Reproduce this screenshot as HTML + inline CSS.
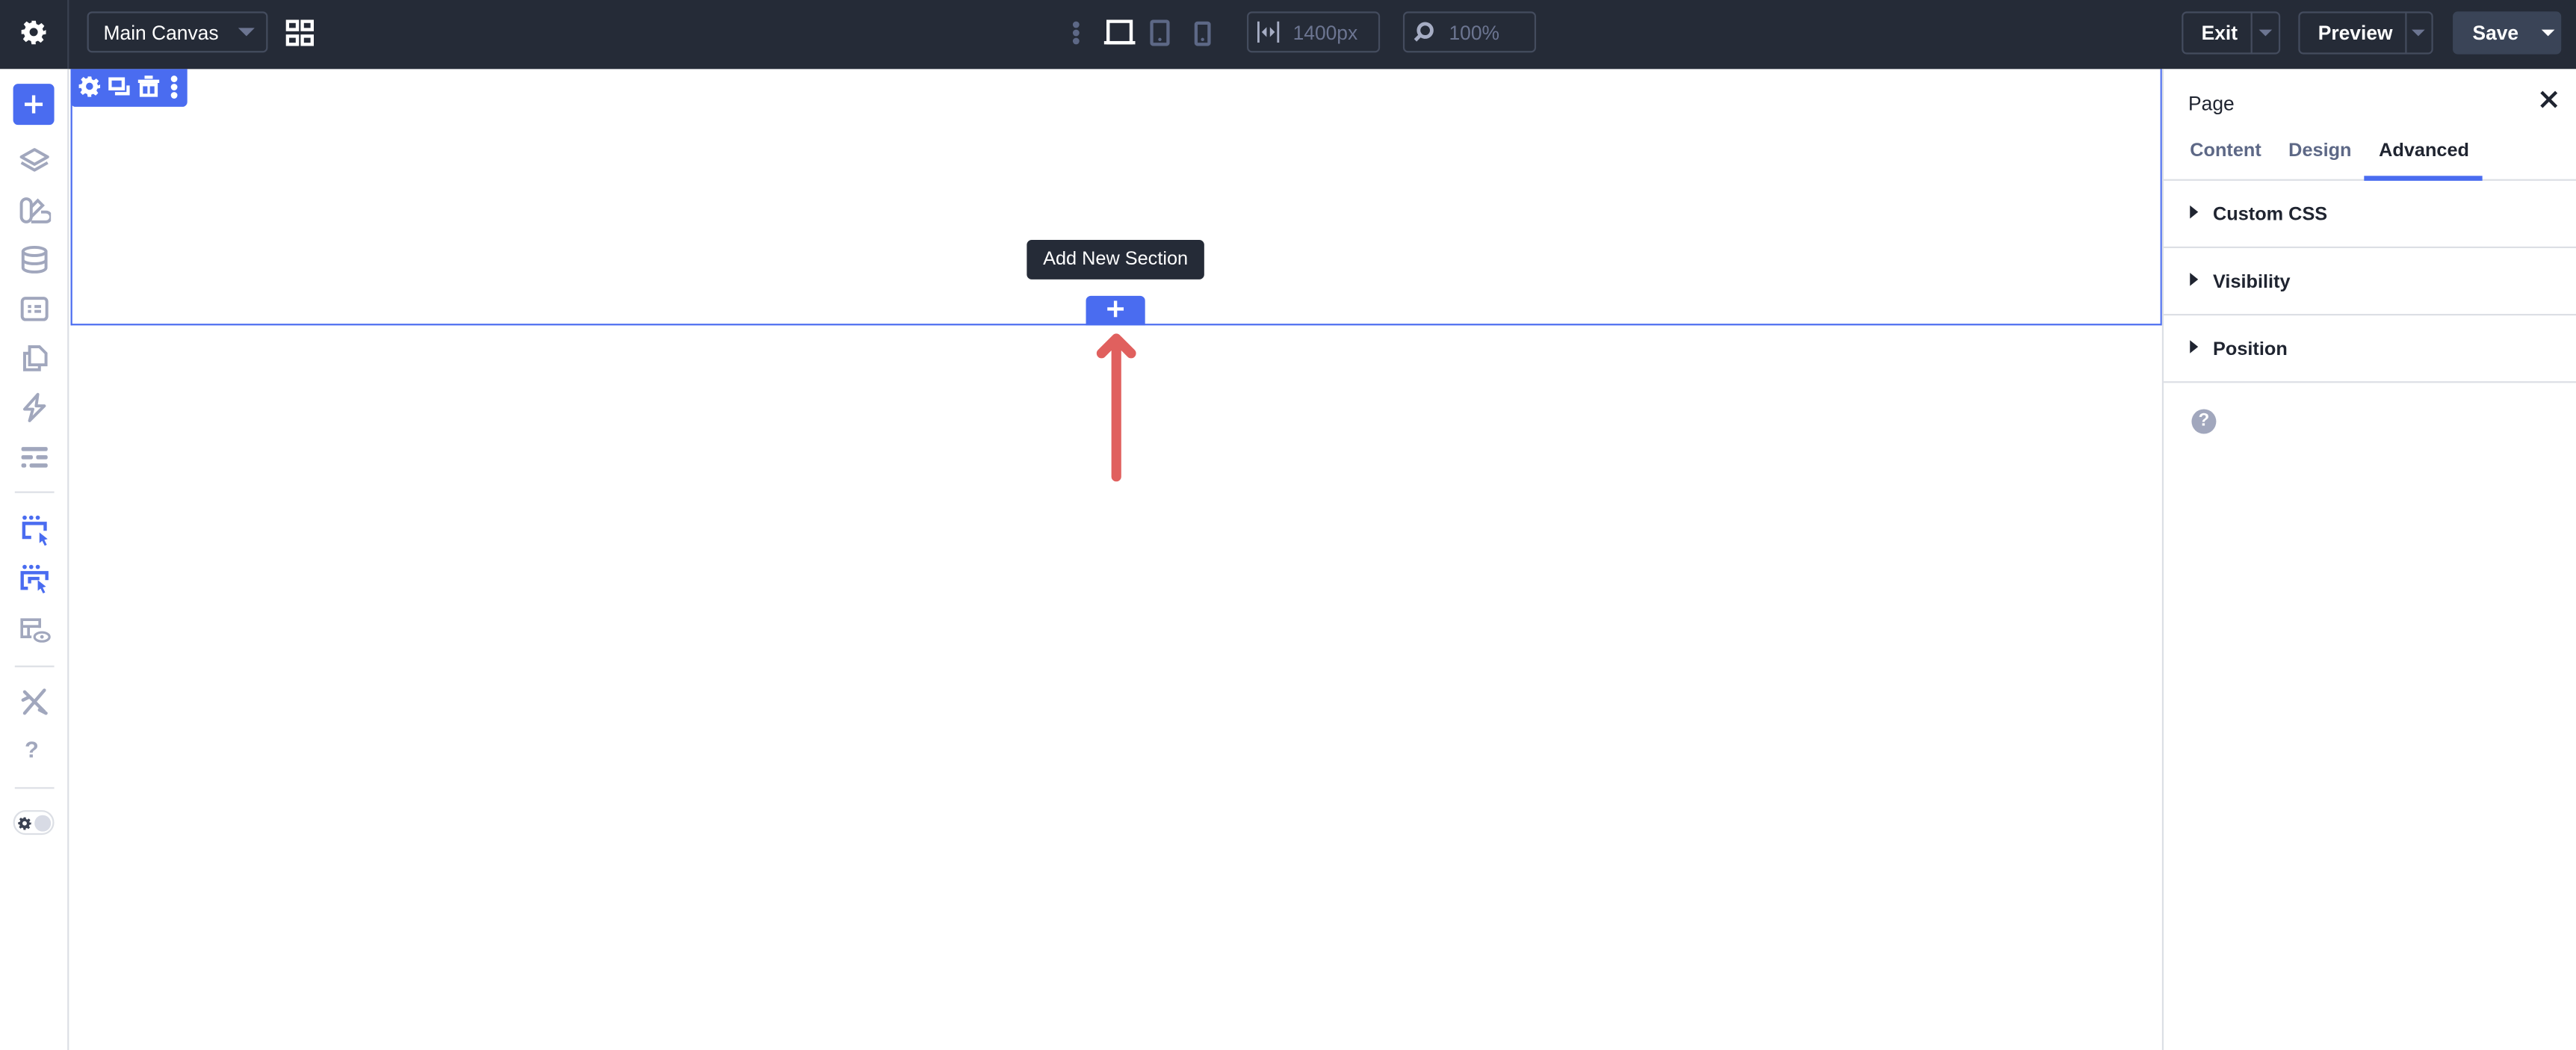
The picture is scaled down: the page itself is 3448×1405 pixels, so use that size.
<!DOCTYPE html>
<html><head><meta charset="utf-8"><style>
*{box-sizing:border-box;margin:0;padding:0}
html,body{width:3448px;height:1404px;overflow:hidden;background:#fff}
#w{position:absolute;left:0;top:0;width:1568px;height:639px;transform:scale(2.19898);transform-origin:0 0;font-family:"Liberation Sans",sans-serif;background:#fff}
.a{position:absolute}
.top{left:0;top:0;width:1568px;height:42px;background:#252b37}
.box{border:1px solid #444c5e;border-radius:3px}
.tx{color:#fff;font-size:12px}
.g{color:#6c7591;font-size:12px}
.side{left:0;top:42px;width:42px;height:597px;border-right:1px solid #dcdfe5;background:#fff}
.ic{position:absolute;left:11px;width:20px;height:20px}
.sep{position:absolute;left:9px;width:24px;height:1px;background:#dcdfe5}
.rp{left:1316px;top:42px;width:252px;height:597px;border-left:1px solid #dcdfe5;background:#fff}
.row{position:absolute;left:0;width:252px;height:41px;border-bottom:1px solid #dcdfe5}
.row span{position:absolute;left:30px;top:15px;font-size:11.5px;font-weight:bold;color:#1f2430}
.row i{position:absolute;left:16px;top:15px;width:0;height:0;border-left:5px solid #1f2430;border-top:4px solid transparent;border-bottom:4px solid transparent}
</style></head><body><div id="w">
<div class="a top"></div>
<div class="a" style="left:41px;top:0;width:1px;height:42px;background:#3a4150"></div>
<svg class="a" style="left:13px;top:12px" width="15" height="15" viewBox="0 0 24 24"><path fill="#fff" d="M10 1h4l.6 3.2 2.3 1 2.7-1.9 2.8 2.8-1.9 2.7 1 2.3L24 10v4l-3.2.6-1 2.3 1.9 2.7-2.8 2.8-2.7-1.9-2.3 1L14 24h-4l-.6-3.2-2.3-1-2.7 1.9-2.8-2.8 1.9-2.7-1-2.3L0 14v-4l3.2-.6 1-2.3-1.9-2.7 2.8-2.8 2.7 1.9 2.3-1zM12 8a4 4 0 100 8 4 4 0 000-8z"/></svg>
<div class="a box" style="left:53px;top:7px;width:110px;height:25px"></div>
<div class="a tx" style="left:63px;top:13px">Main Canvas</div>
<div class="a" style="left:145px;top:17px;border-top:5px solid #6c7591;border-left:5px solid transparent;border-right:5px solid transparent"></div>
<svg class="a" style="left:174px;top:12px" width="17" height="16" viewBox="0 0 17 16"><g fill="none" stroke="#fff" stroke-width="2"><rect x="1" y="1" width="6" height="5"/><rect x="10" y="1" width="6" height="5"/><rect x="1" y="10" width="6" height="5"/><rect x="10" y="10" width="6" height="5"/></g></svg>
<svg class="a" style="left:652px;top:12px" width="6" height="16"><g fill="#5d6886"><circle cx="3" cy="3" r="2"/><circle cx="3" cy="8" r="2"/><circle cx="3" cy="13" r="2"/></g></svg>
<svg class="a" style="left:672px;top:12px" width="20" height="16"><rect x="2.5" y="1" width="14" height="13" fill="none" stroke="#fff" stroke-width="2"/><rect x="0" y="13" width="19" height="2" fill="#fff"/></svg>
<svg class="a" style="left:700px;top:12px" width="12" height="16"><rect x="1" y="1" width="10" height="14" rx="1" fill="none" stroke="#5d6886" stroke-width="2"/><circle cx="6" cy="12" r="1" fill="#5d6886"/></svg>
<svg class="a" style="left:727px;top:13px" width="10" height="15"><rect x="1" y="1" width="8" height="13" rx="1" fill="none" stroke="#5d6886" stroke-width="2"/><circle cx="5" cy="11" r="1" fill="#5d6886"/></svg>
<div class="a box" style="left:759px;top:7px;width:81px;height:25px"></div>
<svg class="a" style="left:765px;top:13px" width="14" height="13"><g stroke="#a6adc4" stroke-width="1.3"><line x1="1" y1="0" x2="1" y2="13"/><line x1="13" y1="0" x2="13" y2="13"/></g><path d="M3 6.5l3-3v6zM11 6.5l-3-3v6z" fill="#a6adc4"/></svg>
<div class="a g" style="left:787px;top:13px">1400px</div>
<div class="a box" style="left:854px;top:7px;width:81px;height:25px"></div>
<svg class="a" style="left:860px;top:13px" width="13" height="13"><circle cx="7.5" cy="5.5" r="4" fill="none" stroke="#a6adc4" stroke-width="2.2"/><line x1="4.5" y1="8.5" x2="1.5" y2="11.5" stroke="#a6adc4" stroke-width="2.2"/></svg>
<div class="a g" style="left:882px;top:13px">100%</div>
<div class="a box" style="left:1328px;top:7px;width:60px;height:26px"></div>
<div class="a" style="left:1370px;top:7px;width:1px;height:26px;background:#444c5e"></div>
<div class="a tx" style="left:1340px;top:13px;font-weight:bold">Exit</div>
<div class="a" style="left:1375px;top:18px;border-top:4px solid #6c7591;border-left:4px solid transparent;border-right:4px solid transparent"></div>
<div class="a box" style="left:1399px;top:7px;width:82px;height:26px"></div>
<div class="a" style="left:1464px;top:7px;width:1px;height:26px;background:#444c5e"></div>
<div class="a tx" style="left:1411px;top:13px;font-weight:bold">Preview</div>
<div class="a" style="left:1468px;top:18px;border-top:4px solid #6c7591;border-left:4px solid transparent;border-right:4px solid transparent"></div>
<div class="a" style="left:1493px;top:7px;width:66px;height:26px;background:#3a4457;border-radius:3px"></div>
<div class="a tx" style="left:1505px;top:13px;font-weight:bold">Save</div>
<div class="a" style="left:1547px;top:18px;border-top:4px solid #fff;border-left:4px solid transparent;border-right:4px solid transparent"></div>

<div class="a side">
<div class="a" style="left:8px;top:9px;width:25px;height:25px;background:#4a6cf0;border-radius:3px"></div>
<svg class="a" style="left:15px;top:16px" width="11" height="11"><path d="M5.5 0v11M0 5.5h11" stroke="#fff" stroke-width="2"/></svg>
<svg class="ic" style="top:46px" viewBox="0 0 20 20" fill="none" stroke="#a1a7bd" stroke-width="1.8" stroke-linejoin="round"><path d="M10 3l8 4.5-8 4.5-8-4.5z"/><path d="M2 11l8 4.5 8-4.5"/></svg>
<svg class="ic" style="top:76px" viewBox="0 0 20 20" fill="none" stroke="#a1a7bd" stroke-width="1.8"><rect x="2" y="3" width="6" height="14" rx="3"/><path d="M8 8l4-4 3 3-7 7M8 17h9a2 2 0 000-6h-3"/></svg>
<svg class="ic" style="top:106px" viewBox="0 0 20 20" fill="none" stroke="#a1a7bd" stroke-width="1.8"><ellipse cx="10" cy="5" rx="7" ry="2.5"/><path d="M3 5v10c0 1.4 3 2.5 7 2.5s7-1.1 7-2.5V5M3 10c0 1.4 3 2.5 7 2.5s7-1.1 7-2.5"/></svg>
<svg class="ic" style="top:136px" viewBox="0 0 20 20" fill="none" stroke="#a1a7bd" stroke-width="1.8"><rect x="2.5" y="3.5" width="15" height="13" rx="2"/><path d="M6 8.5h2M10 8.5h4M6 11.5h2M10 11.5h4"/></svg>
<svg class="ic" style="top:166px" viewBox="0 0 20 20" fill="none" stroke="#a1a7bd" stroke-width="1.8"><path d="M7 3h6l4 4v7H7zM7 7H4v10h9v-3"/></svg>
<svg class="ic" style="top:196px" viewBox="0 0 20 20" fill="none" stroke="#a1a7bd" stroke-width="1.8" stroke-linejoin="round"><path d="M12 2L4 11h5l-2 7 9-9h-5z"/></svg>
<svg class="ic" style="top:226px" viewBox="0 0 20 20" fill="#a1a7bd"><rect x="2" y="4" width="16" height="2.5" rx="1"/><rect x="2" y="9" width="7" height="2.5" rx="1"/><rect x="11" y="9" width="7" height="2.5" rx="1"/><rect x="2" y="14" width="3" height="2.5" rx="1"/><rect x="7" y="14" width="11" height="2.5" rx="1"/></svg>
<div class="sep" style="top:257px"></div>
<svg class="ic" style="top:271px" viewBox="0 0 20 20"><g fill="#4a6cf0"><circle cx="4" cy="2" r="1.3"/><circle cx="8" cy="2" r="1.3"/><circle cx="12" cy="2" r="1.3"/><path d="M13 11l5 4-2 .5 1.5 3-1.3.6-1.5-3-1.7 1.4z"/></g><path d="M8 14H3.5V5.5h13V10" fill="none" stroke="#4a6cf0" stroke-width="2"/></svg>
<svg class="ic" style="top:301px" viewBox="0 0 20 20"><g fill="#4a6cf0"><circle cx="4" cy="2" r="1.3"/><circle cx="8" cy="2" r="1.3"/><circle cx="12" cy="2" r="1.3"/><path d="M12 10l5 4-2 .5 1.5 3-1.3.6-1.5-3-1.7 1.4z"/></g><path d="M6 15H2.5V5.5h15V10M7 12V9h6" fill="none" stroke="#4a6cf0" stroke-width="2"/></svg>
<svg class="ic" style="top:331px" viewBox="0 0 22 20" width="22"><path d="M9 15H2.5V3.5h12V9M2.5 8h12M7 8v7" fill="none" stroke="#a1a7bd" stroke-width="1.8"/><ellipse cx="16" cy="15" rx="5" ry="3" fill="#fff" stroke="#a1a7bd" stroke-width="1.6"/><circle cx="16" cy="15" r="1.2" fill="#a1a7bd"/></svg>
<div class="sep" style="top:363px"></div>
<svg class="ic" style="top:375px" viewBox="0 0 20 20" stroke="#a1a7bd" stroke-width="2" fill="none" stroke-linecap="round"><path d="M4 4l12 12M3 9l4-2M16 3l-12 14M13 15l4 2"/></svg>
<div class="a" style="left:15px;top:406px;font-size:14px;color:#a1a7bd;font-weight:bold">?</div>
<div class="sep" style="top:437px"></div>
<div class="a" style="left:8px;top:451px;width:25px;height:15px;border:1px solid #dcdfe5;border-radius:8px"></div>
<svg class="a" style="left:11px;top:455px" width="8" height="8" viewBox="0 0 24 24"><path fill="#3a4152" d="M10 1h4l.6 3.2 2.3 1 2.7-1.9 2.8 2.8-1.9 2.7 1 2.3L24 10v4l-3.2.6-1 2.3 1.9 2.7-2.8 2.8-2.7-1.9-2.3 1L14 24h-4l-.6-3.2-2.3-1-2.7 1.9-2.8-2.8 1.9-2.7-1-2.3L0 14v-4l3.2-.6 1-2.3-1.9-2.7 2.8-2.8 2.7 1.9 2.3-1zM12 8a4 4 0 100 8 4 4 0 000-8z"/></svg>
<div class="a" style="left:21px;top:454px;width:10px;height:10px;border-radius:5px;background:#d8dbe5"></div>
</div>

<div class="a" style="left:43px;top:42px;width:1273px;height:156px;border:1px solid #4a6cf0;border-top:none"></div>
<div class="a" style="left:43px;top:42px;width:71px;height:23px;background:#4a6cf0;border-radius:0 0 3px 3px"></div>
<svg class="a" style="left:48px;top:46px" width="13" height="13" viewBox="0 0 24 24"><path fill="#fff" d="M10 1h4l.6 3.2 2.3 1 2.7-1.9 2.8 2.8-1.9 2.7 1 2.3L24 10v4l-3.2.6-1 2.3 1.9 2.7-2.8 2.8-2.7-1.9-2.3 1L14 24h-4l-.6-3.2-2.3-1-2.7 1.9-2.8-2.8 1.9-2.7-1-2.3L0 14v-4l3.2-.6 1-2.3-1.9-2.7 2.8-2.8 2.7 1.9 2.3-1zM12 8a4 4 0 100 8 4 4 0 000-8z"/></svg>
<svg class="a" style="left:66px;top:47px" width="13" height="12"><rect x="1" y="1" width="8" height="6" fill="none" stroke="#fff" stroke-width="2"/><path d="M4 10h8V5" fill="none" stroke="#fff" stroke-width="2"/></svg>
<svg class="a" style="left:84px;top:46px" width="13" height="13"><path d="M4 1h5M0 3.5h13" stroke="#fff" stroke-width="2"/><rect x="2" y="5.5" width="9" height="6.5" fill="none" stroke="#fff" stroke-width="2"/><path d="M6.5 6v5" stroke="#fff" stroke-width="1.5"/></svg>
<svg class="a" style="left:103px;top:45px" width="6" height="16"><g fill="#fff"><circle cx="3" cy="3" r="2"/><circle cx="3" cy="8" r="2"/><circle cx="3" cy="13" r="2"/></g></svg>

<div class="a" style="left:625px;top:146px;width:108px;height:24px;background:#252b37;border-radius:3px;color:#fff;font-size:11.5px;text-align:center;line-height:24px">Add New Section</div>
<div class="a" style="left:661px;top:180px;width:36px;height:18px;background:#4a6cf0;border-radius:3px 3px 0 0"></div>
<svg class="a" style="left:674px;top:183px" width="10" height="10"><path d="M5 0v10M0 5h10" stroke="#fff" stroke-width="2"/></svg>
<svg class="a" style="left:660px;top:198px" width="40" height="100"><path d="M19.5 92V8M10.5 17l9-9 9 9" fill="none" stroke="#e0605e" stroke-width="6" stroke-linecap="round" stroke-linejoin="round"/></svg>

<div class="a rp">
<div class="a" style="left:15px;top:14px;font-size:12px;color:#1f2430">Page</div>
<svg class="a" style="left:229px;top:13px" width="11" height="11"><path d="M1 1l9 9M10 1l-9 9" stroke="#1f2430" stroke-width="2"/></svg>
<div class="a" style="left:16px;top:44px;font-size:11.5px;color:#5d6886;font-weight:bold">Content</div>
<div class="a" style="left:76px;top:44px;font-size:11.5px;color:#5d6886;font-weight:bold">Design</div>
<div class="a" style="left:131px;top:44px;font-size:11.5px;color:#1f2430;font-weight:bold">Advanced</div>
<div class="row" style="top:27px;height:41px"></div>
<div class="a" style="left:122px;top:65px;width:72px;height:3px;background:#4a6cf0"></div>
<div class="row" style="top:68px"><i></i><span>Custom CSS</span></div>
<div class="row" style="top:109px"><i></i><span>Visibility</span></div>
<div class="row" style="top:150px"><i></i><span>Position</span></div>
<div class="a" style="left:17px;top:207px;width:15px;height:15px;border-radius:8px;background:#a1a7bd;color:#fff;font-size:11px;font-weight:bold;text-align:center;line-height:15px">?</div>
</div>
</div></body></html>
